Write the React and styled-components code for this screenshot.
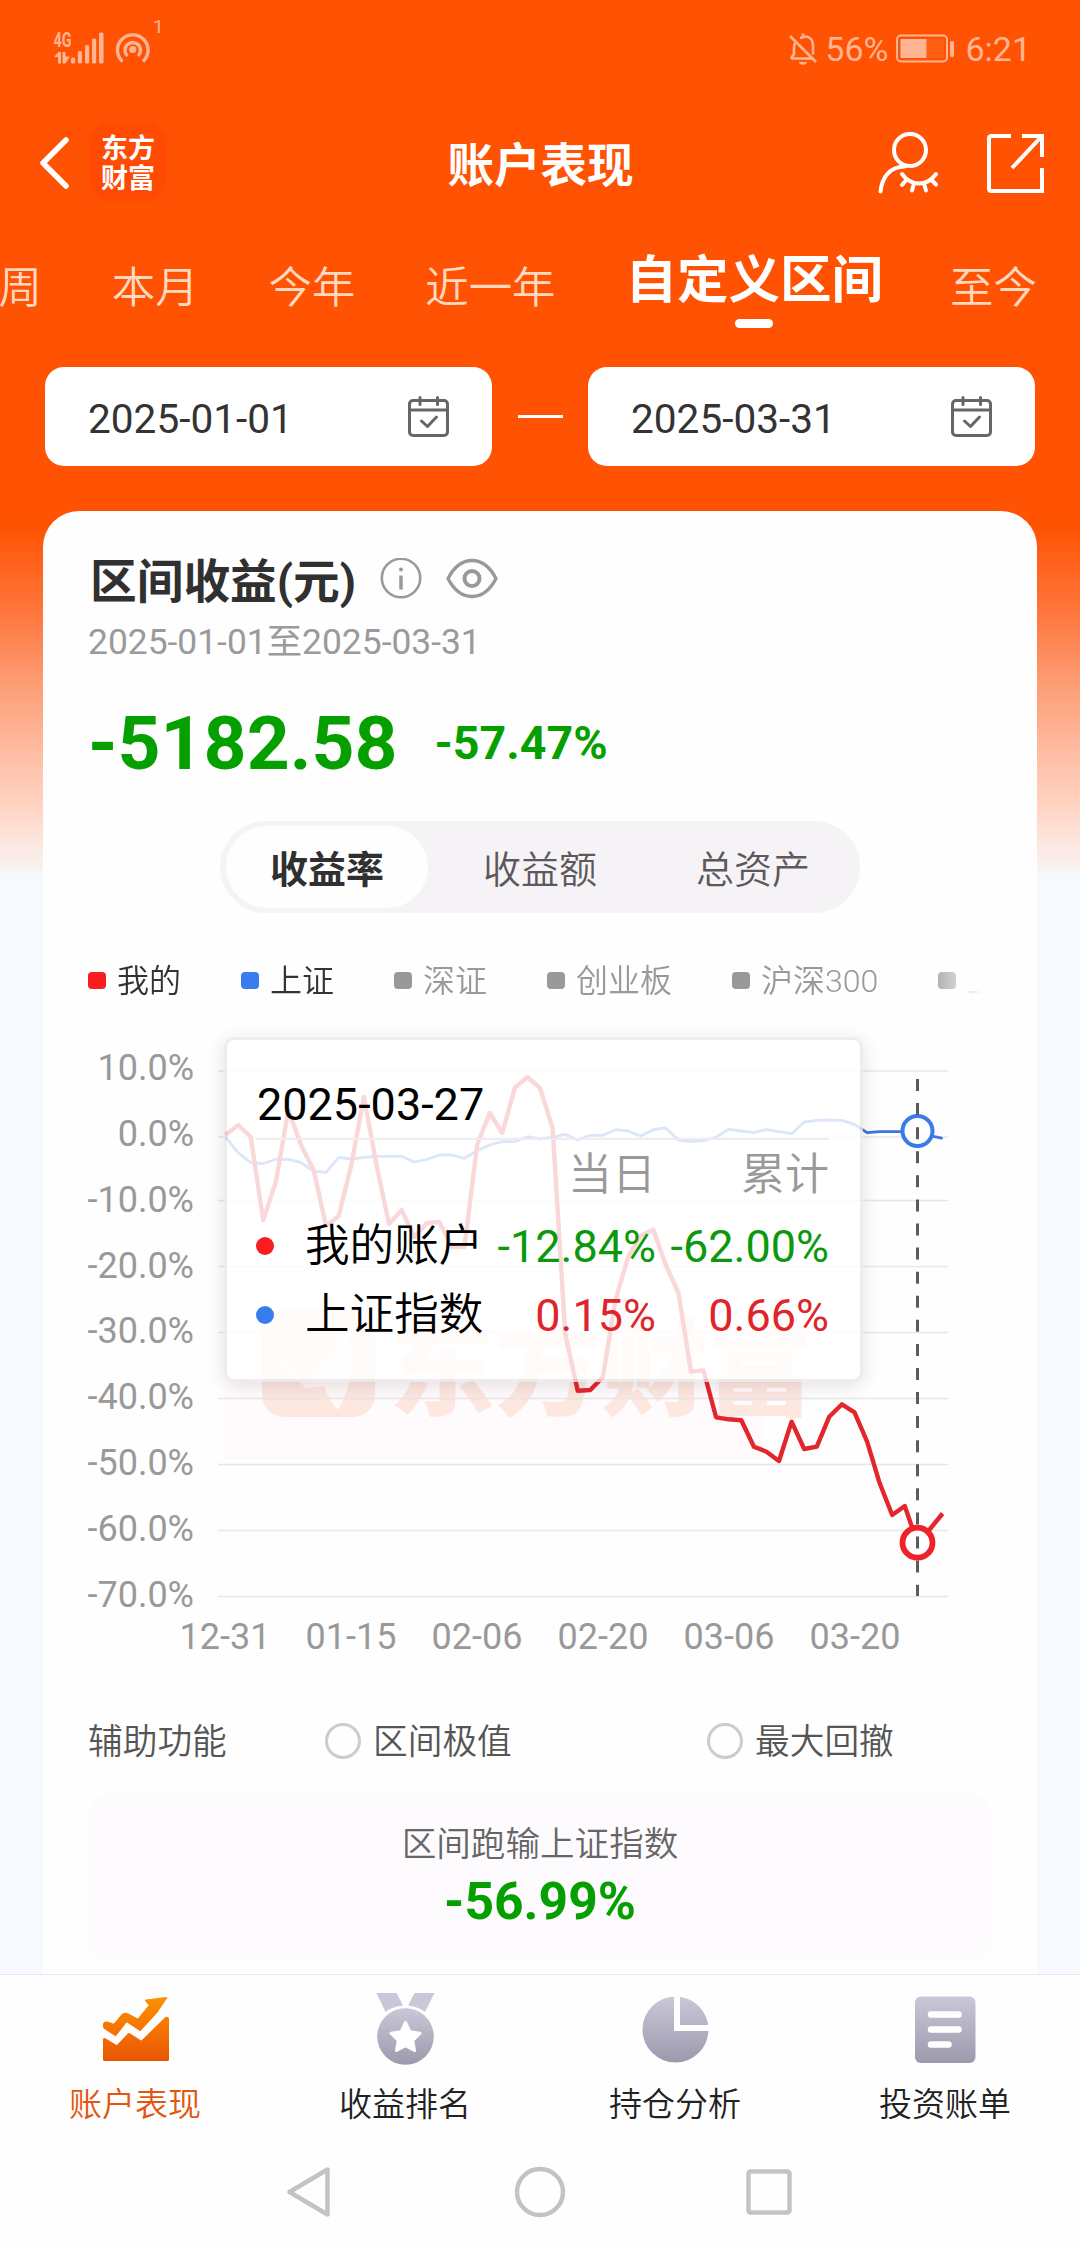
import React, { useState } from "react";
import styled, { createGlobalStyle } from "styled-components";

const GlobalStyle = createGlobalStyle`
  *,
  *::before {
    box-sizing: border-box;
  }

  body {
    margin: 0;
    background: #fefefe;
    font-family: Roboto, "Noto Sans CJK SC", sans-serif;
  }
`;

// Page shell
const Page = styled.div`
  width: 1080px;
  height: 2244px;
  display: flex;
  flex-direction: column;
  overflow: hidden;
  background: linear-gradient(
    #ff5202 0,
    #ff5202 525px,
    #fe7a42 620px,
    #fd9b71 680px,
    #febca2 752px,
    #ffd2c0 802px,
    #fce8e2 845px,
    #f8f1ef 868px,
    #f6faff 874px
  );
`;

// Status bar
const StatusBar = styled.div`
  height: 100px;
  padding: 0 49px 0 54px;
  display: flex;
  justify-content: space-between;
  color: #ffb593;
`;

const StatusGroup = styled.div`
  display: flex;
  align-items: center;
  height: 98px;
`;

const StatusText = styled.span`
  font-size: 34px;
  line-height: 40px;
  margin-left: ${(props) => props.$gap}px;
`;

// Header
const Header = styled.header`
  height: 128px;
  padding: 0 36px 0 39px;
  display: grid;
  grid-template-columns: 1fr auto 1fr;
  align-items: center;
  color: #fff;
`;

const HeaderSide = styled.div`
  display: flex;
  align-items: center;
  justify-content: ${(props) => (props.$end ? "flex-end" : "flex-start")};
  gap: ${(props) => props.$gap}px;
`;

const Logo = styled.div`
  width: 74px;
  height: 74px;
  margin-top: -4px;
  border-radius: 18px;
  background: #ff4a04;
  box-shadow: 0 0 5px #ff4a04;
  display: flex;
  flex-direction: column;
  align-items: center;
  justify-content: center;
  font-family: "Noto Sans CJK SC", sans-serif;
  font-weight: 700;
  font-size: 27px;
  line-height: 30px;
`;

const HeaderTitle = styled.h1`
  margin: 0;
  padding: 3px 2px 0 0;
  font-size: 46.5px;
  line-height: 60px;
  font-weight: 700;
`;

// Period tabs
const PeriodTabs = styled.nav`
  height: 118px;
  margin-left: -45px;
  display: flex;
  align-items: flex-start;
  gap: 70px;
  white-space: nowrap;
`;

const PeriodTab = styled.div`
  padding-top: ${(props) => (props.$active ? "21px" : "29px")};
  margin-right: ${(props) => (props.$active ? "-3px" : "0")};
  font-size: ${(props) => (props.$active ? "51.5px" : "43.4px")};
  font-weight: ${(props) => (props.$active ? 700 : 350)};
  line-height: 64px;
  color: ${(props) => (props.$active ? "#fff" : "#ffd9bf")};
  display: flex;
  flex-direction: column;
  align-items: center;
`;

const TabMark = styled.span`
  width: 38px;
  height: 9px;
  margin-top: 6px;
  border-radius: 5px;
  background: #fff;
`;

// Date range
const DateRange = styled.div`
  margin: 21px 45px 0;
  height: 99px;
  display: flex;
  align-items: center;
  justify-content: space-between;
`;

const DateBox = styled.div`
  width: 447px;
  height: 99px;
  padding: 0 42px 0 43px;
  border-radius: 19px;
  background: #fff;
  display: flex;
  align-items: center;
  justify-content: space-between;
`;

const DateText = styled.span`
  padding-top: 5px;
  font-size: 40.6px;
  line-height: 50px;
  color: #333;
`;

const RangeDash = styled.span`
  width: 45px;
  height: 3px;
  background: #fff;
`;

// Performance card
const Card = styled.main`
  width: 994px;
  height: 1463px;
  margin: 45px auto 0;
  padding: 38px 45px 0;
  border-radius: 36px 36px 0 0;
  background: #fefefe;
`;

const CardTitle = styled.div`
  height: 60px;
  display: flex;
  align-items: center;
  gap: 24px;
`;

const CardName = styled.h2`
  margin: 0 0 0 2px;
  padding-top: 5px;
  font-size: 46.7px;
  font-weight: 700;
  line-height: 60px;
  color: #303030;
`;

const CardPeriod = styled.div`
  margin-top: 9px;
  padding-top: 2px;
  height: 44px;
  font-size: 35.4px;
  font-weight: 400;
  line-height: 44px;
  color: #9a9a9a;
`;

const AmountRow = styled.div`
  height: 90px;
  margin-top: 36px;
  display: flex;
  align-items: center;
  gap: 37px;
  color: #05a000;
  font-weight: 700;
`;

const Amount = styled.span`
  font-size: 75px;
`;

const AmountRate = styled.span`
  font-size: 46.6px;
`;

const Segmented = styled.div`
  width: 640px;
  height: 92px;
  margin: 33px auto 0;
  padding: 5px 6px;
  border-radius: 46px;
  background: #f6f3f6;
  display: flex;
  justify-content: space-between;
`;

const Segment = styled.div`
  width: 202px;
  padding-bottom: 2px;
  border-radius: 41px;
  display: flex;
  align-items: center;
  justify-content: center;
  font-size: 38px;
  font-weight: ${(props) => (props.$active ? 700 : 350)};
  color: ${(props) => (props.$active ? "#303030" : "#5c585c")};
  background: ${(props) => (props.$active ? "#fefefe" : "transparent")};
`;

const Legend = styled.div`
  height: 46px;
  margin-top: 45px;
  display: flex;
  align-items: center;
  gap: 60px;
  overflow: hidden;
  white-space: nowrap;
  mask-image: linear-gradient(90deg, #000 835px, transparent 895px);
`;

const LegendItem = styled.div`
  display: flex;
  align-items: center;
  flex-shrink: 0;
  gap: 11px;
  font-size: 32px;
  font-weight: 350;
  line-height: 46px;
  color: ${(props) => (props.$muted ? "#999" : "#333")};

  &::before {
    content: "";
    width: 18px;
    height: 17px;
    margin-bottom: 2px;
    border-radius: 4px;
    background: ${(props) => props.$color};
  }
`;

// Chart
const Chart = styled.section`
  position: relative;
  margin-top: 30px;
`;

const ChartBody = styled.div`
  height: 580px;
  display: flex;
`;

const YAxis = styled.div`
  width: 105px;
  padding-top: 2px;
  display: flex;
  flex-direction: column;
  align-items: flex-end;
  font-size: 36px;
  line-height: 65.86px;
  color: #999;

  span {
    margin-right: -1px;
  }
`;

const Plot = styled.svg`
  flex-shrink: 0;
  width: 800px;
  height: 580px;
`;

const XAxis = styled.div`
  height: 42px;
  padding-top: 2px;
  margin-left: 74px;
  display: flex;
  font-size: 36px;
  line-height: 42px;
  color: #999;

  span {
    width: 126px;
    text-align: center;
  }
`;

const Tooltip = styled.div`
  position: absolute;
  left: 136px;
  top: 3px;
  width: 639px;
  height: 345px;
  padding: 23px 31px 0 29px;
  border: 3px solid rgba(232, 232, 234, 0.8);
  border-radius: 10px;
  background: rgba(255, 255, 255, 0.82);
  background-clip: padding-box;
  box-shadow: 0 4px 18px rgba(60, 20, 50, 0.13);
  font-size: 45px;
  line-height: 69px;
  color: #000;
`;

const TooltipDate = styled.div`
  height: 77px;
  padding-left: 1px;
  line-height: 84px;
  border-bottom: 2px solid #ededf1;
`;

const TooltipRow = styled.div`
  display: grid;
  grid-template-columns: 49px 1fr 173px;
  height: ${(props) => (props.$head ? 71 : 69)}px;
  align-items: center;
  white-space: nowrap;
  font-size: ${(props) => (props.$head ? 44 : 45)}px;
  font-weight: ${(props) => (props.$head ? 350 : 400)};
`;

const TooltipDot = styled.i`
  width: 18px;
  height: 18px;
  border-radius: 50%;
  background: ${(props) => props.$color};
`;

const TooltipPair = styled.div`
  padding-top: 1px;
  display: flex;
  justify-content: space-between;
`;

const TooltipName = styled.span`
  font-size: 44.6px;
  font-weight: 350;
`;

const TooltipValue = styled.span`
  text-align: right;
  padding-top: ${(props) => (props.$drop ? 1 : 0)}px;
  color: ${(props) => props.$color};
`;

// Helper options
const Options = styled.div`
  height: 44px;
  margin-top: 64px;
  display: grid;
  grid-template-columns: 237px 382px auto;
  align-items: center;
  font-size: 34.7px;
  font-weight: 350;
  line-height: 44px;
  color: #555;
`;

const Option = styled.div`
  display: flex;
  align-items: center;
  gap: 12px;

  &::before {
    content: "";
    width: 36px;
    height: 36px;
    margin-bottom: 2px;
    border: 3px solid #ccc;
    border-radius: 50%;
  }
`;

const Summary = styled.div`
  height: 169px;
  margin-top: 29px;
  padding-top: 26px;
  border-radius: 22px;
  background: #fefbff;
  text-align: center;
`;

const SummaryLabel = styled.div`
  font-size: 34.6px;
  font-weight: 350;
  line-height: 50px;
  color: #666;
`;

const SummaryValue = styled.div`
  font-size: 51.6px;
  font-weight: 700;
  line-height: 66px;
  color: #05a000;
`;

// Bottom bars
const TabBar = styled.nav`
  height: 158px;
  flex-shrink: 0;
  border-top: 1px solid #e6e6ee;
  background: #fefefe;
  display: flex;
`;

const TabItem = styled.div`
  width: 270px;
  padding-top: 16px;
  display: flex;
  flex-direction: column;
  align-items: center;
  font-size: 33px;
  font-weight: 350;
  line-height: 44px;
  color: ${(props) => (props.$active ? "#e2570f" : "#222")};

  svg {
    margin-bottom: 18px;
  }
`;

const SystemNav = styled.div`
  flex: 1;
  background: #fefefe;
  display: flex;
  justify-content: center;
`;

const periods = ["本周", "本月", "今年", "近一年", "自定义区间", "至今"];
const segments = ["收益率", "收益额", "总资产"];
const legend = [
  { name: "我的", color: "#f91d22" },
  { name: "上证", color: "#397cf0" },
  { name: "深证", color: "#999", muted: true },
  { name: "创业板", color: "#999", muted: true },
  { name: "沪深300", color: "#999", muted: true },
  { name: "上证50", color: "#999", muted: true },
];
const yTicks = ["10.0%", "0.0%", "-10.0%", "-20.0%", "-30.0%", "-40.0%", "-50.0%", "-60.0%", "-70.0%"];
const xTicks = ["12-31", "01-15", "02-06", "02-20", "03-06", "03-20"];
const gridLines = [1071, 1137, 1200.5, 1266.5, 1332.5, 1398.5, 1464.5, 1530.5, 1596.5];

const tooltipRows = [
  { name: "我的账户", dot: "#f91d22", day: "-12.84%", total: "-62.00%", color: "#0b990b" },
  { name: "上证指数", dot: "#397cf0", day: "0.15%", total: "0.66%", color: "#e0242b" },
];

// One y value per trading day, 12.58px apart
const accountLine = [
  1135, 1125, 1137, 1220, 1182, 1110, 1145, 1170, 1226, 1216, 1165, 1097, 1165, 1224, 1210, 1237, 1223, 1222,
  1247, 1247, 1145, 1113, 1133, 1088, 1077, 1088, 1128, 1334, 1390.7, 1390, 1377, 1300, 1257, 1236, 1229.5,
  1265, 1293, 1371.5, 1370.5, 1417.3, 1419.3, 1420.3, 1446.7, 1451.7, 1461, 1421.7, 1449, 1446.7, 1416.7,
  1404.3, 1412.3, 1441.7, 1483.3, 1515, 1506, 1543, 1529, 1513.5,
];
const indexLine = [
  1137, 1152.7, 1162.7, 1163.7, 1159.3, 1159.3, 1162.7, 1171, 1172.3, 1157.3, 1159, 1157.3, 1156.3, 1156.3,
  1156.3, 1162, 1159.3, 1155, 1155, 1158.3, 1150.7, 1145, 1141.7, 1141.7, 1136.7, 1139, 1137.3, 1134.3, 1140,
  1135.3, 1135.3, 1129.7, 1131, 1136, 1129.7, 1128, 1140, 1141.7, 1140.7, 1137.3, 1129.3, 1131, 1132.7, 1129.7,
  1131.7, 1133.7, 1122, 1120.3, 1120, 1120.3, 1124.3, 1132.7, 1131.7, 1131.7, 1131.7, 1131, 1135.7, 1138.3,
];

const toPoints = (values) => values.map((y, i) => `${(225.5 + i * 12.58).toFixed(1)},${y}`).join(" ");

const SignalIcon = () => (
  <svg width="112" height="98" viewBox="54 0 112 98" fill="currentColor">
    <text x="53.500" y="47" fontSize="19.500" fontWeight="700" textLength="18" lengthAdjust="spacingAndGlyphs">
      4G
    </text>
    <path d="M54 57l4.500-5H61v11.500h-3V57zM62.500 52h3v4.500H70l-4.500 7h-3z" />
    <rect x="71" y="57.500" width="4.200" height="6" rx="1.500" />
    <rect x="77.800" y="51" width="4.200" height="12.500" rx="1.500" />
    <rect x="85" y="45" width="4.200" height="18.500" rx="1.500" />
    <rect x="92" y="38.500" width="4.200" height="25" rx="1.500" />
    <rect x="99" y="32.500" width="4.500" height="31" rx="1.500" />
    <g fill="none" stroke="currentColor" strokeWidth="3.400">
      <path d="M122.500 61.500a15.300 15.300 0 1 1 20.500 0" />
      <path d="M127.500 56a7.800 7.800 0 1 1 10.500 0" />
    </g>
    <circle cx="132.700" cy="49.500" r="3.600" />
    <text x="153" y="32.500" fontSize="19">1</text>
  </svg>
);

const BellOffIcon = () => (
  <svg width="30" height="34" viewBox="0 0 30 34" fill="none" stroke="currentColor" strokeWidth="2.600">
    <path d="M3 26.500h22M25 22.500V13c0-5-3-8-7-8.500L12 6M7 11c-.8 2-1 3-1 5v6l-3 4.500M15 1.500v3M2 4l26 26" />
    <path d="M11 30a4 2.800 0 0 0 8 0" fill="currentColor" stroke="none" />
  </svg>
);

const BatteryIcon = () => (
  <svg width="60" height="30" viewBox="0 0 60 30">
    <rect x="1" y="1.500" width="50" height="26" rx="4" fill="none" stroke="currentColor" strokeWidth="2" />
    <rect x="4.500" y="5" width="26" height="19" fill="currentColor" />
    <rect x="30.500" y="5" width="17.500" height="19" fill="currentColor" opacity="0.120" />
    <rect x="54" y="7" width="4" height="16" rx="1.500" fill="currentColor" />
  </svg>
);

const BatterySlot = styled.span`
  display: flex;
  margin-left: 8px;
`;

const BackIcon = () => (
  <svg width="32" height="56" viewBox="0 0 32 56" fill="none" stroke="#fff" strokeWidth="5.500" strokeLinecap="round" strokeLinejoin="round">
    <path d="M27 4L4 27l23 23" />
  </svg>
);

const HiddenUserIcon = () => (
  <svg width="62" height="64" viewBox="0 0 62 64" fill="none" stroke="#fff" strokeWidth="4" strokeLinecap="round">
    <circle cx="32" cy="18" r="16" />
    <path d="M2.500 59.500C4 45 12 34.500 27 34.500M24 42c4 5.500 10 9.500 17 9.500s13-4 17-9.500M27.500 49l-3.500 4M36 51.500l-2 7M46 51.500l2 7M54 48.500l4 4" />
  </svg>
);

const ShareIcon = () => (
  <svg width="57" height="60" viewBox="0 0 57 60" fill="none" stroke="#fff" strokeWidth="4">
    <path d="M24 2H4.500Q2 2 2 4.500V54.500Q2 57 4.500 57H55V34M35 2H55V23M54 3L25 34" />
  </svg>
);

const CalendarIcon = () => (
  <svg width="42" height="42" viewBox="0 0 42 42" fill="none" stroke="#666" strokeWidth="3" strokeLinecap="round" strokeLinejoin="round">
    <rect x="1.500" y="4.500" width="38" height="35" rx="3.500" />
    <path d="M2 14h37M12 1.500v7M29.500 1.500v7M13.500 25l6 5.500 9-9.500" />
  </svg>
);

const InfoIcon = () => (
  <svg width="42" height="42" viewBox="0 0 42 42" fill="none" stroke="#999" strokeWidth="2.600">
    <circle cx="21" cy="20" r="19.200" />
    <path d="M21 17.500v14" strokeWidth="3.500" />
    <circle cx="21" cy="11.500" r="2" fill="#999" stroke="none" />
  </svg>
);

const EyeIcon = () => (
  <svg width="52" height="42" viewBox="0 0 52 42" fill="none" stroke="#999" strokeWidth="3.400" strokeLinejoin="round">
    <path d="M2 20.500C8 9 16 2.500 26 2.500S44 9 50 20.500C44 32 36 38.500 26 38.500S8 32 2 20.500z" />
    <circle cx="26" cy="20.500" r="7.500" strokeWidth="4" />
  </svg>
);

const PerformanceIcon = () => (
  <svg width="72" height="74" viewBox="99 1991 72 74">
    <defs>
      <linearGradient id="orange" x1="0" y1="1996" x2="0" y2="2061" gradientUnits="userSpaceOnUse">
        <stop offset="0" stopColor="#ff9200" />
        <stop offset="1" stopColor="#ea5504" />
      </linearGradient>
    </defs>
    <g fill="url(#orange)" stroke="url(#orange)" strokeLinejoin="round">
      <path
        strokeWidth="2"
        d="M146 2000.500L166 1998 157 2011.500 140 2030 126.500 2021 115.500 2035 104.500 2028Q102.500 2022 107 2022.500L114 2025 122.500 2015Q125 2013 128 2014.500L138 2020 150 2005.500z"
      />
      <path
        strokeWidth="3"
        d="M104.500 2039.500L117 2047 129 2034.500 141.500 2042.500 166 2018.500Q167.500 2018 167.500 2019V2059.500H104.500z"
      />
    </g>
  </svg>
);

const GreyFill = () => (
  <defs>
    <linearGradient id="grey" x1="0" y1="0" x2="0" y2="1">
      <stop offset="0" stopColor="#cbc7d8" />
      <stop offset="1" stopColor="#9d99ad" />
    </linearGradient>
  </defs>
);

const MedalIcon = () => (
  <svg width="62" height="74" viewBox="375 1991.500 62 74">
    <GreyFill />
    <path d="M377.500 1993.500H397.500L404 2006Q393 2007 386.500 2012.500zM415.500 1993.500H435.500L426 2012.500Q419 2007 409 2006z" fill="#cbc7d8" />
    <circle cx="406.500" cy="2037" r="28.300" fill="url(#grey)" />
    <path
      d="M406.500 2023l4.500 9.300 10 1.400-7.300 7.100 1.800 10.200-9-4.900-9 4.900 1.800-10.200-7.300-7.100 10-1.400z"
      fill="#fff"
      stroke="#fff"
      strokeWidth="3"
      strokeLinejoin="round"
    />
  </svg>
);

const PieIcon = () => (
  <svg width="68" height="74" viewBox="641 1991 68 74">
    <GreyFill />
    <circle cx="675.500" cy="2029.500" r="33" fill="url(#grey)" />
    <path d="M677 1994V2028H711" fill="none" stroke="#fefefe" strokeWidth="6" />
  </svg>
);

const BillIcon = () => (
  <svg width="62" height="74" viewBox="914 1991 62 74">
    <GreyFill />
    <rect x="915" y="1996.500" width="60.500" height="66.500" rx="6" fill="url(#grey)" />
    <path d="M931 2014.500h27.500M931 2029.500h27.500M931 2044.500h17.500" stroke="#fff" strokeWidth="6.500" strokeLinecap="round" />
  </svg>
);

const bottomTabs = [
  { name: "账户表现", icon: <PerformanceIcon /> },
  { name: "收益排名", icon: <MedalIcon /> },
  { name: "持仓分析", icon: <PieIcon /> },
  { name: "投资账单", icon: <BillIcon /> },
];

const App = () => {
  const [period] = useState("自定义区间");
  const [segment] = useState("收益率");
  const [page] = useState("账户表现");

  return (
    <Page>
      <GlobalStyle />

      <StatusBar>
        <StatusGroup>
          <SignalIcon />
        </StatusGroup>
        <StatusGroup>
          <BellOffIcon />
          <StatusText $gap={7}>56%</StatusText>
          <BatterySlot>
            <BatteryIcon />
          </BatterySlot>
          <StatusText $gap={9}>6:21</StatusText>
        </StatusGroup>
      </StatusBar>

      <Header>
        <HeaderSide $gap={20}>
          <BackIcon />
          <Logo>
            <span>东方</span>
            <span>财富</span>
          </Logo>
        </HeaderSide>
        <HeaderTitle>账户表现</HeaderTitle>
        <HeaderSide $end $gap={47}>
          <HiddenUserIcon />
          <ShareIcon />
        </HeaderSide>
      </Header>

      <PeriodTabs>
        {periods.map((name) => (
          <PeriodTab key={name} $active={name === period}>
            {name}
            {name === period && <TabMark />}
          </PeriodTab>
        ))}
      </PeriodTabs>

      <DateRange>
        <DateBox>
          <DateText>2025-01-01</DateText>
          <CalendarIcon />
        </DateBox>
        <RangeDash />
        <DateBox>
          <DateText>2025-03-31</DateText>
          <CalendarIcon />
        </DateBox>
      </DateRange>

      <Card>
        <CardTitle>
          <CardName>区间收益(元)</CardName>
          <InfoIcon />
          <EyeIcon />
        </CardTitle>
        <CardPeriod>2025-01-01至2025-03-31</CardPeriod>

        <AmountRow>
          <Amount>-5182.58</Amount>
          <AmountRate>-57.47%</AmountRate>
        </AmountRow>

        <Segmented>
          {segments.map((name) => (
            <Segment key={name} $active={name === segment}>
              {name}
            </Segment>
          ))}
        </Segmented>

        <Legend>
          {legend.map((item) => (
            <LegendItem key={item.name} $color={item.color} $muted={item.muted}>
              {item.name}
            </LegendItem>
          ))}
        </Legend>

        {/* Return chart */}
        <Chart>
          <ChartBody>
            <YAxis>
              {yTicks.map((tick) => (
                <span key={tick}>{tick}</span>
              ))}
            </YAxis>
            <Plot viewBox="193 1034 800 580">
              <defs>
                <linearGradient id="area" x1="0" y1="0" x2="0" y2="1">
                  <stop offset="0" stopColor="#fffafd" stopOpacity="0" />
                  <stop offset="1" stopColor="#fffbfd" />
                </linearGradient>
              </defs>
              <rect x="224" y="1137" width="540" height="323" fill="url(#area)" />
              <g fill="#fde7df">
                <rect x="262" y="1310" width="113" height="107" rx="22" />
                <text
                  x="389"
                  y="1407"
                  fontSize="106"
                  fontWeight="900"
                  fontFamily="'Noto Sans CJK SC', sans-serif"
                >
                  东方财富
                </text>
              </g>
              <path d="M284 1360l22 22 42-50q10 44-10 78-8-8-14-24l-18 2-22-20z" fill="#fff9f9" />
              {gridLines.map((y) => (
                <path key={y} d={`M218 ${y}H948`} stroke="#e9e6ea" strokeWidth="1.400" />
              ))}
              <polyline points={toPoints(indexLine)} fill="none" stroke="#3c74dc" strokeWidth="2.800" strokeLinejoin="round" />
              <polyline points={toPoints(accountLine)} fill="none" stroke="#e3262b" strokeWidth="4.400" strokeLinejoin="round" />
              <circle cx="917.500" cy="1131" r="15" fill="#fff" stroke="#397be8" strokeWidth="4" />
              <circle cx="917.500" cy="1542.700" r="15" fill="#fff" stroke="#ee2329" strokeWidth="5.800" />
              <path d="M917.500 1079V1596" stroke="#5c5a5c" strokeWidth="3" strokeDasharray="12 12.080" />
            </Plot>
          </ChartBody>
          <XAxis>
            {xTicks.map((tick) => (
              <span key={tick}>{tick}</span>
            ))}
          </XAxis>

          <Tooltip>
            <TooltipDate>2025-03-27</TooltipDate>
            <TooltipRow $head>
              <span />
              <TooltipValue $color="#999">当日</TooltipValue>
              <TooltipValue $color="#999">累计</TooltipValue>
            </TooltipRow>
            {tooltipRows.map((row) => (
              <TooltipRow key={row.name}>
                <TooltipDot $color={row.dot} />
                <TooltipPair>
                  <TooltipName>{row.name}</TooltipName>
                  <TooltipValue $color={row.color}>{row.day}</TooltipValue>
                </TooltipPair>
                <TooltipValue $drop $color={row.color}>
                  {row.total}
                </TooltipValue>
              </TooltipRow>
            ))}
          </Tooltip>
        </Chart>

        <Options>
          <span>辅助功能</span>
          <Option>区间极值</Option>
          <Option>最大回撤</Option>
        </Options>

        <Summary>
          <SummaryLabel>区间跑输上证指数</SummaryLabel>
          <SummaryValue>-56.99%</SummaryValue>
        </Summary>
      </Card>

      <TabBar>
        {bottomTabs.map((tab) => (
          <TabItem key={tab.name} $active={tab.name === page}>
            {tab.icon}
            {tab.name}
          </TabItem>
        ))}
      </TabBar>

      <SystemNav>
        <svg width="540" height="112" viewBox="270 2132 540 112" fill="none" stroke="#c3c3c3" strokeWidth="4.500" strokeLinejoin="round">
          <path d="M327.500 2169.500V2214.500L289.500 2192z" />
          <circle cx="540" cy="2192" r="23" />
          <rect x="748.500" y="2171.500" width="41" height="41" rx="2" />
        </svg>
      </SystemNav>
    </Page>
  );
};

export default App;
